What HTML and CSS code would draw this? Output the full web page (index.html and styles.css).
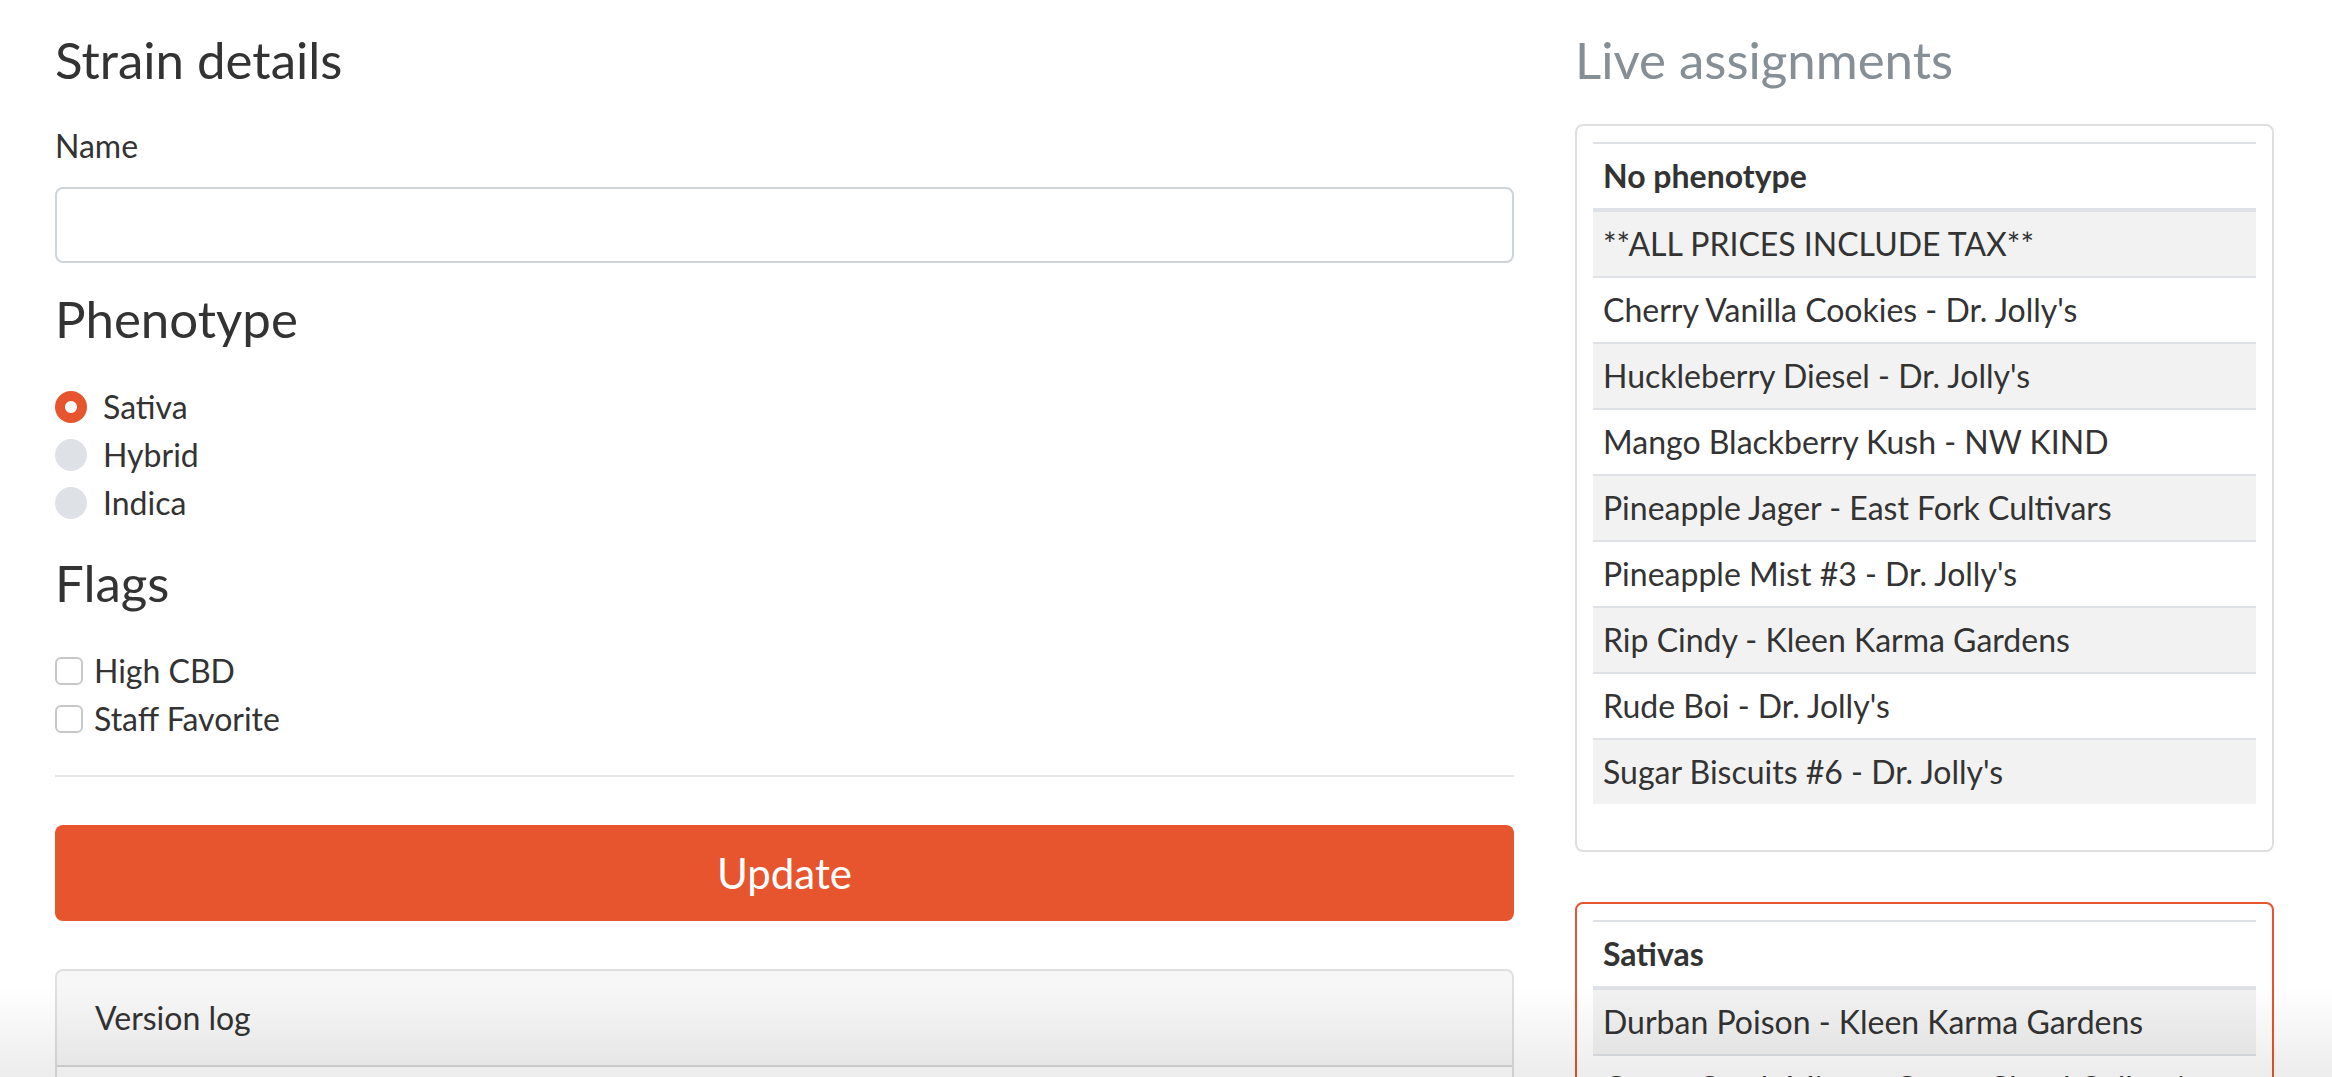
FILE: index.html
```html
<!DOCTYPE html>
<html lang="en">
<head>
<meta charset="utf-8">
<title>Strain details</title>
<link rel="stylesheet" href="styles.css">
</head>
<body>
<div class="page">
  <section class="main">
    <h3 class="heading">Strain details</h3>
    <label class="field-label" for="name">Name</label>
    <input class="text-input" id="name" type="text">

    <h3 class="heading heading-gap">Phenotype</h3>
    <div class="choice-group">
      <label class="radio-row"><input type="radio" name="pheno" checked><span>Sativa</span></label>
      <label class="radio-row"><input type="radio" name="pheno"><span>Hybrid</span></label>
      <label class="radio-row"><input type="radio" name="pheno"><span>Indica</span></label>
    </div>

    <h3 class="heading heading-gap">Flags</h3>
    <div class="choice-group">
      <label class="check-row"><input type="checkbox"><span>High CBD</span></label>
      <label class="check-row"><input type="checkbox"><span>Staff Favorite</span></label>
    </div>

    <hr class="divider">

    <button class="btn-primary" type="button">Update</button>

    <div class="log-card">
      <div class="log-header">Version log</div>
      <div class="log-body">
        <div class="log-line">Version 3 &mdash; updated phenotype</div>
      </div>
    </div>
  </section>

  <aside class="side">
    <h3 class="heading heading-muted">Live assignments</h3>

    <div class="assign-card">
      <table class="assign-table">
        <thead><tr><th>No phenotype</th></tr></thead>
        <tbody>
          <tr><td>**ALL PRICES INCLUDE TAX**</td></tr>
          <tr><td>Cherry Vanilla Cookies - Dr. Jolly's</td></tr>
          <tr><td>Huckleberry Diesel - Dr. Jolly's</td></tr>
          <tr><td>Mango Blackberry Kush - NW KIND</td></tr>
          <tr><td>Pineapple Jager - East Fork Cultivars</td></tr>
          <tr><td>Pineapple Mist #3 - Dr. Jolly's</td></tr>
          <tr><td>Rip Cindy - Kleen Karma Gardens</td></tr>
          <tr><td>Rude Boi - Dr. Jolly's</td></tr>
          <tr><td>Sugar Biscuits #6 - Dr. Jolly's</td></tr>
        </tbody>
      </table>
    </div>

    <div class="assign-card assign-card-active">
      <table class="assign-table">
        <thead><tr><th>Sativas</th></tr></thead>
        <tbody>
          <tr><td>Durban Poison - Kleen Karma Gardens</td></tr>
          <tr><td>Green Crack Mints - Green Cloud Collective</td></tr>
          <tr><td>Jack Herer - Kleen Karma Gardens</td></tr>
        </tbody>
      </table>
    </div>
  </aside>
</div>
<div class="bottom-fade"></div>
</body>
</html>
```
FILE: styles.css
```css
html, body {
  margin: 0;
  padding: 0;
  overflow: hidden;
  background: #fff;
}

body {
  font-family: "Lato", "Liberation Sans", sans-serif;
  font-size: 32px;
  line-height: 48px;
  color: #333;
}

.page {
  display: flex;
  gap: 61px;
  padding: 28px 58px 0 55px;
  align-items: flex-start;
}

.main {
  width: 1459px;
  flex: none;
  display: flex;
  flex-direction: column;
}

.side {
  width: 699px;
  flex: none;
  display: flex;
  flex-direction: column;
}

.heading {
  margin: 0;
  font-size: 51px;
  line-height: 64px;
  font-weight: 400;
  color: #333;
}

.heading-gap {
  margin-top: 24px;
}

.heading-muted {
  color: #868e96;
}

.field-label {
  display: block;
  margin-top: 30px;
  margin-bottom: 17px;
}

.text-input {
  box-sizing: border-box;
  width: 100%;
  height: 76px;
  margin: 0;
  border: 2px solid #ced4da;
  border-radius: 8px;
  background: #fff;
  font: inherit;
  padding: 0 24px;
  outline: none;
}

.choice-group {
  margin-top: 32px;
  display: flex;
  flex-direction: column;
}

.radio-row,
.check-row {
  display: flex;
  align-items: center;
  height: 48px;
}

.radio-row {
  gap: 16px;
}

.check-row {
  gap: 11px;
}

.radio-row input {
  appearance: none;
  -webkit-appearance: none;
  margin: 0;
  width: 32px;
  height: 32px;
  border-radius: 50%;
  background: #dee2e6;
  flex: none;
}

.radio-row input:checked {
  background: radial-gradient(circle, #fff 0, #fff 5.5px, #e6552d 6.5px);
}

.check-row input {
  appearance: none;
  -webkit-appearance: none;
  margin: 0;
  box-sizing: border-box;
  width: 28px;
  height: 28px;
  border: 2px solid #c6c8ca;
  border-radius: 6px;
  background: #fff;
  flex: none;
}

.divider {
  margin: 32px 0 0;
  border: 0;
  border-top: 2px solid rgba(0, 0, 0, 0.1);
  height: 0;
}

.btn-primary {
  margin-top: 48px;
  height: 96px;
  width: 100%;
  border: 0;
  border-radius: 8px;
  background: #e6552d;
  color: #fff;
  font-family: inherit;
  font-size: 42px;
  line-height: 56px;
  display: flex;
  align-items: center;
  justify-content: center;
  padding: 0;
}

.log-card {
  margin-top: 48px;
  border: 2px solid rgba(0, 0, 0, 0.125);
  border-radius: 8px;
  overflow: hidden;
}

.log-header {
  background: rgba(0, 0, 0, 0.03);
  padding: 23px 38px;
  border-bottom: 2px solid rgba(0, 0, 0, 0.125);
}

.log-body {
  padding: 24px 38px;
}

.assign-card {
  margin-top: 32px;
  border: 2px solid rgba(0, 0, 0, 0.125);
  border-radius: 8px;
  padding: 16px 16px 16px;
}

.assign-card-active {
  margin-top: 50px;
  border-color: #e6552d;
}

.assign-table {
  width: 100%;
  border-collapse: separate;
  border-spacing: 0;
  margin-bottom: 30px;
}

.assign-table th,
.assign-table td {
  text-align: left;
  padding: 8px 10px;
  line-height: 48px;
  font-size: 32px;
}

.assign-table th {
  font-weight: 700;
  border-top: 2px solid #dee2e6;
  border-bottom: 4px solid #dee2e6;
}

.assign-table td {
  border-top: 2px solid #dee2e6;
}

.assign-table tbody tr:first-child td {
  border-top: 0;
}

.assign-table tbody tr:nth-child(odd) td {
  background: #f2f2f2;
}

.bottom-fade {
  position: fixed;
  left: 0;
  right: 0;
  bottom: 0;
  height: 90px;
  background: linear-gradient(to bottom, rgba(0, 0, 0, 0), rgba(0, 0, 0, 0.075));
  pointer-events: none;
}
```
